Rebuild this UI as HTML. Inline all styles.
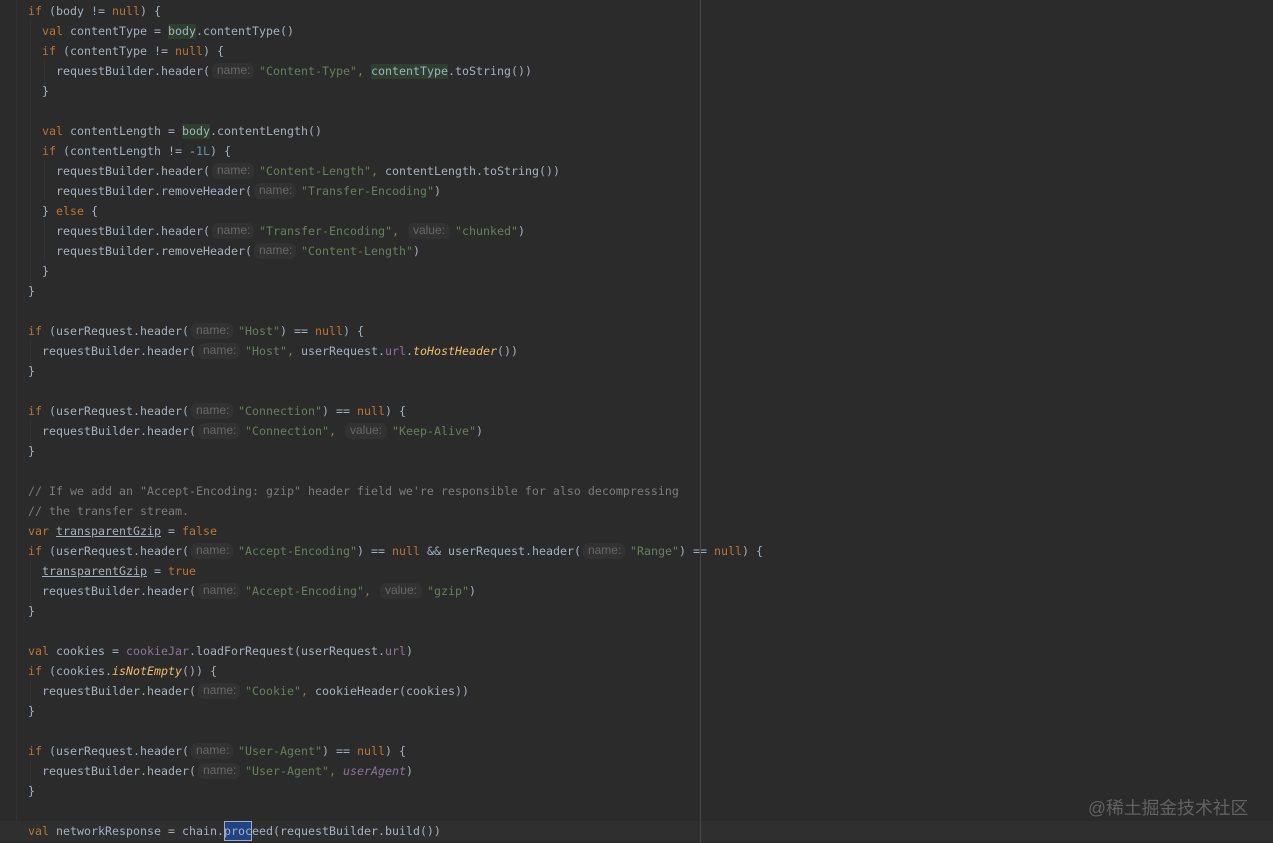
<!DOCTYPE html>
<html><head><meta charset="utf-8">
<style>
html,body{margin:0;padding:0;background:#2b2b2b}
#e{position:relative;width:1273px;height:843px;overflow:hidden;background:#2b2b2b;font-family:"DejaVu Sans Mono","Liberation Mono",monospace;font-size:11.63px;color:#a4b1bf}
.l{position:absolute;white-space:pre;height:20px;line-height:20px;z-index:2;filter:blur(.35px)}
.k{color:#bd7432}.s{color:#66805a}.n{color:#6090b0}.c{color:#7c7c7c}.p{color:#8f72a0}.f{color:#f0bc68;font-style:italic}
.m{color:#8a7a58}
.g{background:linear-gradient(transparent 3px,#2d3f2e 3px,#2d3f2e 18px,transparent 18px);display:inline-block;height:20px;vertical-align:top}
.u{text-decoration:underline}
.i{font-style:italic}
.h{display:inline-block;width:49px;height:20px;vertical-align:top;position:relative}
.h b{position:absolute;left:2px;top:2px;width:42px;height:16px;background:#323232;border-radius:6px;font:normal 12px/15px "Liberation Sans",sans-serif;color:#686868;text-indent:5px}
.v{position:absolute;width:1px;z-index:1;background:#333}
</style></head><body><div id="e">
<div style="position:absolute;left:0;top:821px;width:1273px;height:20px;background:#2f2f2f"></div>
<div class="v" style="left:16px;top:0;height:821px"></div>
<div class="v" style="left:30px;top:20px;height:270px"></div>
<div class="v" style="left:44px;top:60px;height:30px"></div>
<div class="v" style="left:44px;top:160px;height:40px"></div>
<div class="v" style="left:44px;top:220px;height:40px"></div>
<div class="v" style="left:30px;top:340px;height:30px"></div>
<div class="v" style="left:30px;top:420px;height:30px"></div>
<div class="v" style="left:30px;top:560px;height:50px"></div>
<div class="v" style="left:30px;top:680px;height:30px"></div>
<div class="v" style="left:30px;top:760px;height:30px"></div>
<div style="position:absolute;left:700px;top:0;width:1px;height:843px;background:#484848;z-index:3"></div>
<div style="position:absolute;left:224px;top:821px;width:26px;height:18px;background:#214283;border:1px solid #9fadc4;z-index:1"></div>

<div class="l" style="left:28px;top:1px"><span class="k">if</span> (body != <span class="k">null</span>) {</div>
<div class="l" style="left:42px;top:21px"><span class="k">val</span> contentType = <span class="g">body</span>.contentType()</div>
<div class="l" style="left:42px;top:41px"><span class="k">if</span> (contentType != <span class="k">null</span>) {</div>
<div class="l" style="left:56px;top:61px">requestBuilder.header(<span class="h"><b>name:</b></span><span class="s">"Content-Type"</span><span class="m">,</span> <span class="g">contentType</span>.toString())</div>
<div class="l" style="left:42px;top:81px">}</div>
<div class="l" style="left:42px;top:121px"><span class="k">val</span> contentLength = <span class="g">body</span>.contentLength()</div>
<div class="l" style="left:42px;top:141px"><span class="k">if</span> (contentLength != -<span class="n">1L</span>) {</div>
<div class="l" style="left:56px;top:161px">requestBuilder.header(<span class="h"><b>name:</b></span><span class="s">"Content-Length"</span><span class="m">,</span> contentLength.toString())</div>
<div class="l" style="left:56px;top:181px">requestBuilder.removeHeader(<span class="h"><b>name:</b></span><span class="s">"Transfer-Encoding"</span>)</div>
<div class="l" style="left:42px;top:201px">} <span class="k">else</span> {</div>
<div class="l" style="left:56px;top:221px">requestBuilder.header(<span class="h"><b>name:</b></span><span class="s">"Transfer-Encoding"</span><span class="m">,</span> <span class="h"><b>value:</b></span><span class="s">"chunked"</span>)</div>
<div class="l" style="left:56px;top:241px">requestBuilder.removeHeader(<span class="h"><b>name:</b></span><span class="s">"Content-Length"</span>)</div>
<div class="l" style="left:42px;top:261px">}</div>
<div class="l" style="left:28px;top:281px">}</div>
<div class="l" style="left:28px;top:321px"><span class="k">if</span> (userRequest.header(<span class="h"><b>name:</b></span><span class="s">"Host"</span>) == <span class="k">null</span>) {</div>
<div class="l" style="left:42px;top:341px">requestBuilder.header(<span class="h"><b>name:</b></span><span class="s">"Host"</span><span class="m">,</span> userRequest.<span class="p">url</span>.<span class="f">toHostHeader</span>())</div>
<div class="l" style="left:28px;top:361px">}</div>
<div class="l" style="left:28px;top:401px"><span class="k">if</span> (userRequest.header(<span class="h"><b>name:</b></span><span class="s">"Connection"</span>) == <span class="k">null</span>) {</div>
<div class="l" style="left:42px;top:421px">requestBuilder.header(<span class="h"><b>name:</b></span><span class="s">"Connection"</span><span class="m">,</span> <span class="h"><b>value:</b></span><span class="s">"Keep-Alive"</span>)</div>
<div class="l" style="left:28px;top:441px">}</div>
<div class="l c" style="left:28px;top:481px">// If we add an "Accept-Encoding: gzip" header field we're responsible for also decompressing</div>
<div class="l c" style="left:28px;top:501px">// the transfer stream.</div>
<div class="l" style="left:28px;top:521px"><span class="k">var</span> <span class="u">transparentGzip</span> = <span class="k">false</span></div>
<div class="l" style="left:28px;top:541px"><span class="k">if</span> (userRequest.header(<span class="h"><b>name:</b></span><span class="s">"Accept-Encoding"</span>) == <span class="k">null</span> &amp;&amp; userRequest.header(<span class="h"><b>name:</b></span><span class="s">"Range"</span>) == <span class="k">null</span>) {</div>
<div class="l" style="left:42px;top:561px"><span class="u">transparentGzip</span> = <span class="k">true</span></div>
<div class="l" style="left:42px;top:581px">requestBuilder.header(<span class="h"><b>name:</b></span><span class="s">"Accept-Encoding"</span><span class="m">,</span> <span class="h"><b>value:</b></span><span class="s">"gzip"</span>)</div>
<div class="l" style="left:28px;top:601px">}</div>
<div class="l" style="left:28px;top:641px"><span class="k">val</span> cookies = <span class="p">cookieJar</span>.loadForRequest(userRequest.<span class="p">url</span>)</div>
<div class="l" style="left:28px;top:661px"><span class="k">if</span> (cookies.<span class="f">isNotEmpty</span>()) {</div>
<div class="l" style="left:42px;top:681px">requestBuilder.header(<span class="h"><b>name:</b></span><span class="s">"Cookie"</span><span class="m">,</span> cookieHeader(cookies))</div>
<div class="l" style="left:28px;top:701px">}</div>
<div class="l" style="left:28px;top:741px"><span class="k">if</span> (userRequest.header(<span class="h"><b>name:</b></span><span class="s">"User-Agent"</span>) == <span class="k">null</span>) {</div>
<div class="l" style="left:42px;top:761px">requestBuilder.header(<span class="h"><b>name:</b></span><span class="s">"User-Agent"</span><span class="m">,</span> <span class="p i">userAgent</span>)</div>
<div class="l" style="left:28px;top:781px">}</div>
<div class="l" style="left:28px;top:821px"><span class="k">val</span> networkResponse = chain.proceed(requestBuilder.build())</div>

<div style="position:absolute;left:1088px;top:796px;font:17.8px/24px 'Liberation Sans','Noto Sans CJK SC',sans-serif;color:#626262;white-space:nowrap;z-index:4">@稀土掘金技术社区</div>
</div></body></html>
